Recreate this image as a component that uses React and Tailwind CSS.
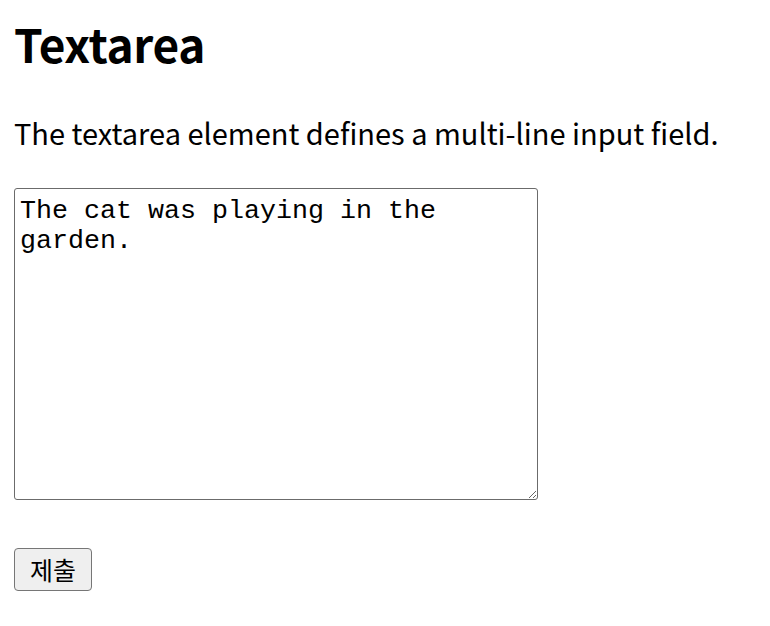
import { useState } from "react";

const App = () => {
  const [text, setText] = useState("The cat was playing in the garden.");

  function handleSubmit(e) {
    e.preventDefault();
  }

  return (
    <div className="min-h-screen bg-white px-[14px] pt-[17px] text-black font-['Noto_Sans_CJK_KR','Noto_Sans',sans-serif]">
      <h2 className="text-[46px] leading-[52px] font-bold tracking-[-0.3px]">Textarea</h2>

      <p className="mt-[43px] text-[29px] leading-[40px]">
        The textarea element defines a multi-line input field.
      </p>

      <form onSubmit={handleSubmit} className="mt-[36px]">
        <textarea
          value={text}
          onChange={(e) => setText(e.target.value)}
          className="block w-[524px] h-[312px] border border-[#6b6b6b] rounded-[3px] px-[5px] pt-[7px] font-['Liberation_Mono',monospace] text-[26.67px] leading-[30px] outline-none"
        />
        <button
          type="submit"
          className="mt-[48px] h-[43px] w-[78px] bg-[#efefef] border border-[#767676] rounded-[4px] text-[25px] font-['Noto_Sans_CJK_KR',sans-serif] leading-none"
        >
          제출
        </button>
      </form>
    </div>
  );
};

export default App;
